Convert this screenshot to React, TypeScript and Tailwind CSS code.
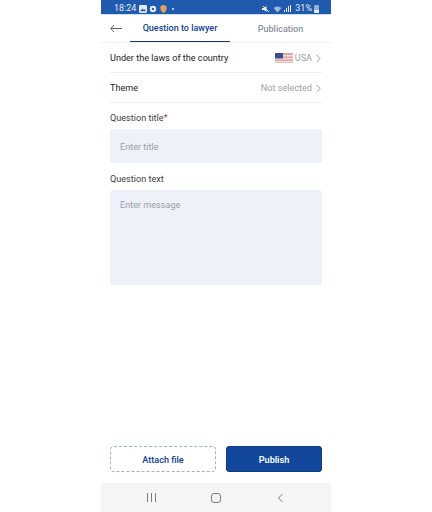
import { ChevronRight } from "lucide-react";

function StatusBar() {
  return (
    <div className="flex h-[15px] shrink-0 items-center justify-between border-b border-[#cfe0ea] bg-[#1f5aae] pl-[13px] pr-[12px] pt-[3px] text-[9px] text-[#e4ecf7]">
      <div className="flex items-center gap-[2.500px]">
        <span>18:24</span>
        <svg width="8" height="8" viewBox="0 0 7 7">
          <rect width="7" height="7" rx="1" fill="#e4ecf7" />
          <path d="M1 5.500 3 3l1.200 1.400L5 3.600 6 5.500z" fill="#1f5aae" />
        </svg>
        <svg width="8" height="8" viewBox="0 0 7 7">
          <circle cx="3.500" cy="3.500" r="2.800" fill="#e4ecf7" />
          <circle cx="3.500" cy="3.500" r="1" fill="#1f5aae" />
        </svg>
        <svg width="7" height="8" viewBox="0 0 7 8">
          <path d="M.5 1 3.500 0l3 1v3c0 2-1.500 3.200-3 4C2 7.200.5 6 .5 4z" fill="#e8a25a" />
        </svg>
        <span className="ml-[3px] h-[2px] w-[2px] rounded-full bg-[#e4ecf7]" />
      </div>
      <div className="flex items-center gap-[2px]">
        <svg width="8" height="8" viewBox="0 0 8 8" className="mr-[1px]">
          <path d="M0 3h2l2.500-2v6L2 5H0z" fill="#e4ecf7" />
          <path d="m1 1 6 6" stroke="#e4ecf7" strokeWidth="1" />
        </svg>
        <svg width="9" height="8" viewBox="0 0 9 8">
          <path d="M.5 3a6 6 0 0 1 8 0L4.500 7.500z" fill="#9db8dd" />
        </svg>
        <svg width="7" height="8" viewBox="0 0 7 8">
          <path d="M0 7h1V5H0zM2 7h1V3H2zM4 7h1V1H4zM6 7h1V0H6z" fill="#e4ecf7" />
        </svg>
        <span className="ml-[2px]">31%</span>
        <span className="flex h-[8px] w-[5px] flex-col justify-end rounded-[1px] bg-[#8fb0dc]">
          <span className="h-[3px] rounded-b-[1px] bg-[#e4ecf7]" />
        </span>
      </div>
    </div>
  );
}

function Header() {
  return (
    <div className="flex h-[28px] shrink-0 items-stretch border-b border-[#eef0f3]">
      <div className="flex w-[29px] items-center justify-center">
        <svg width="12" height="9" viewBox="0 0 12 9" fill="none" stroke="#555" strokeWidth="0.9">
          <path d="M12 4.500H.8M4 1 .8 4.500 4 8" />
        </svg>
      </div>
      <div className="flex w-[100px] items-center justify-center border-b-[1.5px] border-[#12357f] pt-[2px] text-[9px] font-medium text-[#12408f]">
        Question to lawyer
      </div>
      <div className="flex flex-1 items-center justify-center pt-[2px] text-[9px] font-medium text-[#8b929c]">
        Publication
      </div>
    </div>
  );
}

function SelectRow({ label, value, flag }: { label: string; value: string; flag?: boolean }) {
  return (
    <div className="flex h-[30px] items-center justify-between border-b border-[#eceef0] pt-[2px] text-[9.100px]">
      <span className="text-[#1d1d1d]">{label}</span>
      <span className="flex items-center text-[#9a9fa6]">
        {flag && (
          <svg width="18" height="10" viewBox="0 0 18 10" className="mr-[2px] rounded-[1px]">
            <rect width="18" height="10" fill="#e3a5a0" />
            <rect y="2" width="18" height="1.500" fill="#f3dedc" />
            <rect y="5" width="18" height="1.500" fill="#f3dedc" />
            <rect y="8" width="18" height="1.500" fill="#f3dedc" />
            <rect width="8" height="5.500" fill="#3d4f8f" />
          </svg>
        )}
        {value}
        <ChevronRight size={13} strokeWidth={1.3} className="mr-[-3px] text-[#6f747b]" />
      </span>
    </div>
  );
}

function Field({ label, placeholder, required, tall }: { label: string; placeholder: string; required?: boolean; tall?: boolean }) {
  return (
    <div>
      <div className="h-[11px] text-[9.100px] leading-[11px] text-[#3c3f44]">
        {label}
        {required && <span className="text-[#c0392b]">*</span>}
      </div>
      {tall ? (
        <div className="mt-[5px] h-[95px] rounded-[3px] bg-[#edf1f9] px-[10px] pt-[10px] text-[9.100px] leading-[11px] text-[#9a9fa8]">
          {placeholder}
        </div>
      ) : (
        <div className="mt-[5px] flex h-[34px] items-center rounded-[3px] bg-[#edf1f9] px-[10px] pt-[3px] text-[9.100px] text-[#9a9fa8]">
          {placeholder}
        </div>
      )}
    </div>
  );
}

function NavBar() {
  return (
    <div className="flex h-[29px] shrink-0 items-center bg-[#f5f5f5] pl-[46px]">
      <div className="flex w-[9px] justify-between">
        <span className="h-[9px] w-[1px] bg-[#7d7d7d]" />
        <span className="h-[9px] w-[1px] bg-[#7d7d7d]" />
        <span className="h-[9px] w-[1px] bg-[#7d7d7d]" />
      </div>
      <div className="ml-[55px] h-[10px] w-[10px] rounded-[3px] border border-[#7d7d7d]" />
      <div className="ml-[56px]">
        <svg width="7" height="10" viewBox="0 0 7 10" fill="none" stroke="#7d7d7d" strokeWidth="1">
          <path d="M5.500 1 1.500 5l4 4" />
        </svg>
      </div>
    </div>
  );
}

export default function App() {
  return (
    <div className="flex h-[512px] w-[432px] justify-center bg-white font-['Roboto',sans-serif]">
      <div className="flex w-[230px] flex-col">
        <StatusBar />
        <Header />
        <div className="flex flex-1 flex-col pl-[9px] pr-[9px]">
          <SelectRow label="Under the laws of the country" value="USA" flag />
          <SelectRow label="Theme" value="Not selected" />
          <div className="mt-[10px] flex flex-col gap-[11px]">
            <Field label="Question title" placeholder="Enter title" required />
            <Field label="Question text" placeholder="Enter message" tall />
          </div>
          <div className="mt-auto mb-[11px] flex gap-[10px] text-[9.100px] font-medium">
            <button className="h-[26px] w-[106px] rounded-[4px] border border-dashed border-[#9db5b5] pt-[3px] text-[#12408f]">
              Attach file
            </button>
            <button className="h-[26px] w-[96px] rounded-[3px] border border-[#0e3a80] bg-[#12479b] pt-[3px] font-semibold text-white">Publish</button>
          </div>
        </div>
        <NavBar />
      </div>
    </div>
  );
}
